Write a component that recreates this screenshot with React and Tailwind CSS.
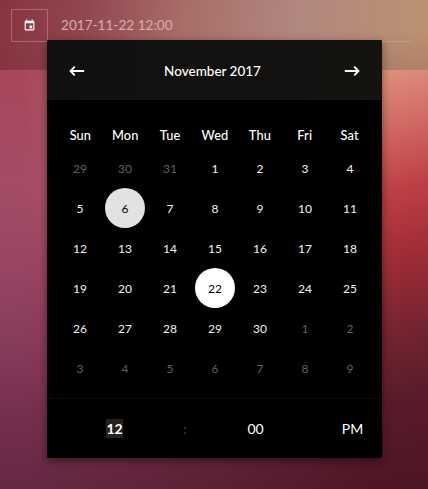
import React from "react";

const WEEKDAYS = ["Sun", "Mon", "Tue", "Wed", "Thu", "Fri", "Sat"];
const DAYS = [
  29, 30, 31, ...Array.from({ length: 30 }, (_, i) => i + 1),
  ...Array.from({ length: 9 }, (_, i) => i + 1),
];

function Arrow({ flip }) {
  return (
    <svg viewBox="0 0 16 12" className={flip ? "h-3 w-4 rotate-180" : "h-3 w-4"} fill="none" stroke="white" strokeWidth="1.8">
      <path d="M15.2 6H2M5.8 1.6 1.5 6 5.8 10.4" />
    </svg>
  );
}

function Day({ value, index }) {
  const outside = index < 3 || index > 32;
  const base = "flex size-10 items-center justify-center rounded-full pt-0.5 pl-px";
  let tone = outside ? "text-[#606060]" : "text-[#f2f2f2]";
  if (index === 8) tone = "bg-[#e2e2e2] text-black";
  if (index === 24) tone = "bg-white text-black";
  return <button className={`${base} ${tone}`}>{value}</button>;
}

function Calendar() {
  return (
    <section className="absolute left-[47px] top-10 flex h-[418px] w-[335px] flex-col overflow-hidden rounded-[2px] bg-black text-white shadow-[0_3px_9px_rgba(0,0,0,0.45)]">
      <header className="flex h-15 shrink-0 items-center justify-between bg-linear-to-r from-[#120f10] to-[#141310] px-[22px] pt-0.5">
        <Arrow />
        <h1 className="mr-1 pt-px text-[13.5px] font-medium">November 2017</h1>
        <Arrow flip />
      </header>
      <div className="h-[298px] shrink-0 px-2.5 pt-[25px]">
        <div className="grid grid-cols-7 pl-px text-center text-[12.8px] leading-5 font-medium tracking-[0.1px]">
          {WEEKDAYS.map((d) => <span key={d}>{d}</span>)}
        </div>
        <div className="mt-[3px] grid grid-cols-7 justify-items-center text-[12px]">
          {DAYS.map((d, i) => <Day key={i} value={d} index={i} />)}
        </div>
      </div>
      <footer className="flex h-15 items-center border-t border-[#100507] text-[14px]">
        <div className="flex w-[135px] justify-center"><span className="bg-[#242322] leading-[19px] font-bold">12</span></div>
        <span className="w-1.5 text-center text-[#444]">:</span>
        <div className="w-[135px] text-center">00</div>
        <div className="flex-1 text-center">PM</div>
      </footer>
    </section>
  );
}

export default function App() {
  return (
    <main className="relative flex h-[489px] w-[428px] flex-col overflow-hidden font-[Lato,sans-serif]">
      <header className="h-[70px] shrink-0 bg-[linear-gradient(180deg,rgba(110,35,55,0)_40%,rgba(110,35,55,0.15)_100%),linear-gradient(100deg,#88343f_0%,#914650_20%,#a86d68_42%,#b28780_68%,#bd9270_100%)] pt-[9px] pr-4 pl-[11px]">
        <div className="flex h-[33px]">
          <div className="flex w-[37px] items-center justify-center border border-white/25">
            <svg viewBox="0 0 24 24" className="size-[13px] fill-white">
              <path d="M17 12h-5v5h5v-5zM16 1v2H8V1H6v2H5c-1.11 0-1.99.9-1.99 2L3 19c0 1.1.89 2 2 2h14c1.1 0 2-.9 2-2V5c0-1.1-.9-2-2-2h-1V1h-2zm3 18H5V8h14v11z" />
            </svg>
          </div>
          <div className="flex flex-1 items-center border-b border-white/15 pt-px pl-[13px] text-[13.6px] text-[#d8adb0]">2017-11-22 12:00</div>
        </div>
      </header>
      <div className="flex-1 bg-[linear-gradient(180deg,#a8475b_0%,#a44c66_28%,#984463_48%,#863b5b_66%,#742f4e_83%,#652945_100%)]">
        <div className="size-full bg-[linear-gradient(165deg,#e8b090_8%,#e09580_18%,#d36e67_29%,#be4046_42%,#9f2c37_55%,#752430_69%,#591b2a_82%,#4c1524_100%)] mask-[linear-gradient(90deg,transparent_5%,black_88%)]" />
      </div>
      <Calendar />
    </main>
  );
}
